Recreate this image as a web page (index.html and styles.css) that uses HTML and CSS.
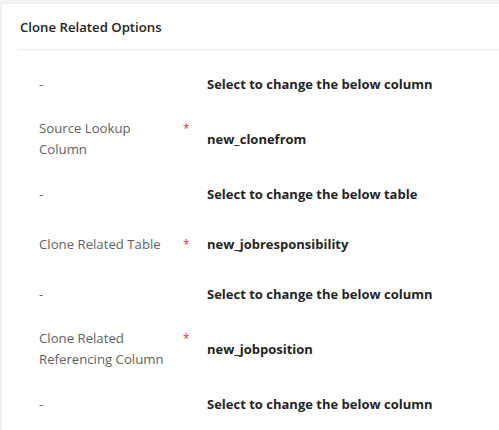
FILE: index.html
```html
<!DOCTYPE html>
<html>
<head>
<meta charset="utf-8">
<link rel="stylesheet" href="styles.css">
</head>
<body>
<div class="card">
  <div class="card-header">Clone Related Options</div>
  <div class="divider"></div>
  <div class="rows">
    <div class="row">
      <div class="label-cell"><span class="label">-</span><span class="req"></span></div>
      <div class="value">Select to change the below column</div>
    </div>
    <div class="row">
      <div class="label-cell"><span class="label">Source Lookup Column</span><span class="req">*</span></div>
      <div class="value">new_clonefrom</div>
    </div>
    <div class="row">
      <div class="label-cell"><span class="label">-</span><span class="req"></span></div>
      <div class="value">Select to change the below table</div>
    </div>
    <div class="row">
      <div class="label-cell"><span class="label">Clone Related Table</span><span class="req">*</span></div>
      <div class="value">new_jobresponsibility</div>
    </div>
    <div class="row">
      <div class="label-cell"><span class="label">-</span><span class="req"></span></div>
      <div class="value">Select to change the below column</div>
    </div>
    <div class="row">
      <div class="label-cell"><span class="label">Clone Related Referencing Column</span><span class="req">*</span></div>
      <div class="value">new_jobposition</div>
    </div>
    <div class="row">
      <div class="label-cell"><span class="label">-</span><span class="req"></span></div>
      <div class="value">Select to change the below column</div>
    </div>
  </div>
</div>
</body>
</html>
```

FILE: styles.css
```css
html, body {
  margin: 0;
  padding: 0;
  background: #f3f3f3;
  font-family: "Open Sans", "Noto Sans", sans-serif;
}
.card {
  margin: 4px 0 0 2px;
  background: #ffffff;
  border-radius: 4px 0 0 0;
  box-shadow: 0 0 2px rgba(0,0,0,0.08);
  min-height: 430px;
}
.card-header {
  height: 45px;
  display: flex;
  align-items: center;
  padding: 0 18px;
  font-size: 13.2px;
  font-weight: 600;
  color: #242424;
}
.divider {
  margin-left: 16px;
  height: 1px;
  background: #edebe9;
}
.rows {
  padding: 9px 0 0 37px;
}
.row {
  display: flex;
  align-items: center;
  min-height: 32px;
  padding: 9px 0;
}
.label-cell {
  display: flex;
  align-items: flex-start;
  width: 168px;
  flex-shrink: 0;
}
.label {
  width: 134px;
  margin-right: 10px;
  font-size: 13.2px;
  line-height: 21px;
  color: #616161;
}
.req {
  width: 24px;
  color: #e0383e;
  font-size: 12px;
  line-height: 12px;
  padding-top: 5px;
}
.value {
  font-size: 13px;
  font-weight: 700;
  color: #242424;
}
```
